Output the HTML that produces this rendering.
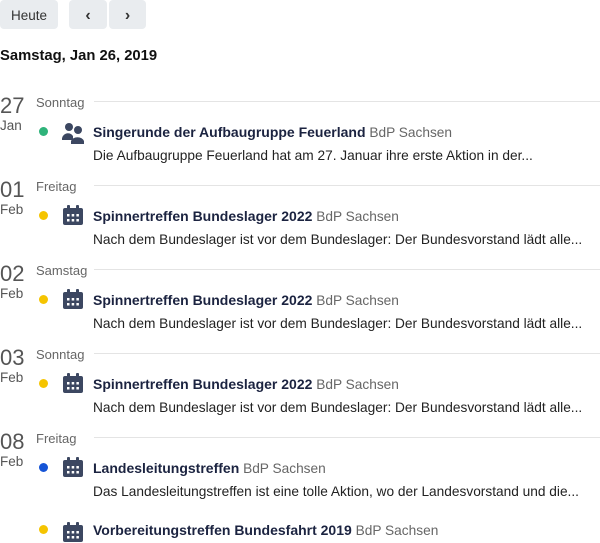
<!DOCTYPE html><html><head><style>
body{margin:0;width:600px;height:543px;overflow:hidden;background:#fff;font-family:"Liberation Sans",sans-serif;position:relative}
.a{position:absolute}
.btn{position:absolute;top:0;height:29px;background:#e9ecef;border-radius:4px;color:#333;font-size:13.5px;line-height:31px;text-align:center}
.num{font-size:22px;color:#555;left:0}
.mon{font-size:13.5px;color:#555;left:0}
.dn{font-size:13px;color:#666;left:36px}
.ln{left:94px;right:0;height:1px;background:#e4e4e4}
.dot{width:9px;height:9px;border-radius:50%;left:39px}
.t{left:93px;font-size:13.7px;color:#1b2340;white-space:nowrap}
.t b{font-weight:bold;font-size:14px}.t span{color:#666}
.d{left:93px;font-size:13.7px;color:#222;white-space:nowrap}
</style></head><body>
<div class="btn" style="left:0;width:58px">Heute</div>
<div class="btn" style="left:69px;width:38px;font-weight:bold;font-size:16px">‹</div>
<div class="btn" style="left:109px;width:37px;font-weight:bold;font-size:16px">›</div>
<div class="a" style="left:0;top:48px;font-size:14.8px;font-weight:bold;color:#111">Samstag, Jan 26, 2019</div>

<div class="a num" style="top:93px">27</div><div class="a mon" style="top:118px">Jan</div>
<div class="a dn" style="top:95px">Sonntag</div><div class="a ln" style="top:101px"></div>
<div class="a dot" style="top:127px;background:#2fb37a"></div>
<svg class="a" style="left:62px;top:122px" width="22" height="22" viewBox="0 0 22 22"><circle cx="7" cy="5" r="4" fill="#3c4761"/><circle cx="16" cy="8" r="4" fill="#3c4761"/><path d="M0 18a6 6 0 0 1 11 -4v4z" fill="#3c4761"/><path d="M9 22v-3a7 6 0 0 1 13 0v3z" fill="#3c4761"/></svg>
<div class="a t" style="top:124px"><b>Singerunde der Aufbaugruppe Feuerland</b> <span>BdP Sachsen</span></div>
<div class="a d" style="top:148px">Die Aufbaugruppe Feuerland hat am 27. Januar ihre erste Aktion in der...</div>

<div id="s"></div>
<script>
var data=[[177,"01","Feb","Freitag","#f5c400","Spinnertreffen Bundeslager 2022","Nach dem Bundeslager ist vor dem Bundeslager: Der Bundesvorstand lädt alle..."],
[261,"02","Feb","Samstag","#f5c400","Spinnertreffen Bundeslager 2022","Nach dem Bundeslager ist vor dem Bundeslager: Der Bundesvorstand lädt alle..."],
[345,"03","Feb","Sonntag","#f5c400","Spinnertreffen Bundeslager 2022","Nach dem Bundeslager ist vor dem Bundeslager: Der Bundesvorstand lädt alle..."],
[429,"08","Feb","Freitag","#1554d6","Landesleitungstreffen","Das Landesleitungstreffen ist eine tolle Aktion, wo der Landesvorstand und die..."]];
var cal='<svg class="a" style="left:63px;top:TOPpx" width="20" height="20" viewBox="0 0 20 20"><rect x="0" y="3" width="20" height="17" rx="2" fill="#3c4761"/><rect x="4" y="0" width="3" height="5" rx="1" fill="#3c4761"/><rect x="13" y="0" width="3" height="5" rx="1" fill="#3c4761"/><g fill="#fff"><rect x="4" y="9" width="2.5" height="2.5"/><rect x="8.7" y="9" width="2.5" height="2.5"/><rect x="13.4" y="9" width="2.5" height="2.5"/><rect x="4" y="14" width="2.5" height="2.5"/><rect x="8.7" y="14" width="2.5" height="2.5"/><rect x="13.4" y="14" width="2.5" height="2.5"/></g></svg>';
var h='';
data.forEach(function(e){var y=e[0];
h+='<div class="a num" style="top:'+y+'px">'+e[1]+'</div><div class="a mon" style="top:'+(y+25)+'px">'+e[2]+'</div>';
h+='<div class="a dn" style="top:'+(y+2)+'px">'+e[3]+'</div><div class="a ln" style="top:'+(y+8)+'px"></div>';
h+='<div class="a dot" style="top:'+(y+34)+'px;background:'+e[4]+'"></div>'+cal.replace('TOP',y+28);
h+='<div class="a t" style="top:'+(y+31)+'px"><b>'+e[5]+'</b> <span>BdP Sachsen</span></div>';
h+='<div class="a d" style="top:'+(y+55)+'px">'+e[6]+'</div>';});
var y=491;
h+='<div class="a dot" style="top:'+(y+34)+'px;background:#f5c400"></div>'+cal.replace('TOP',y+31);
h+='<div class="a t" style="top:'+(y+31)+'px"><b>Vorbereitungstreffen Bundesfahrt 2019</b> <span>BdP Sachsen</span></div>';
document.getElementById('s').innerHTML=h;
</script>
</body></html>
